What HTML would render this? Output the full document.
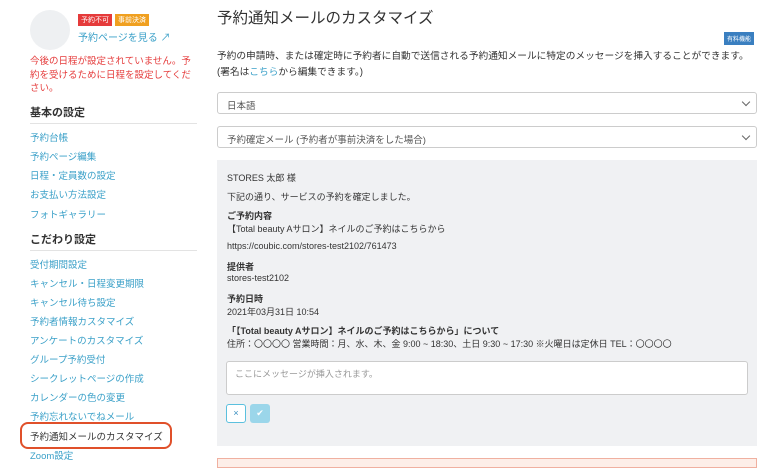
<!DOCTYPE html>
<html><head><meta charset="utf-8"><style>
*{margin:0;padding:0;box-sizing:border-box}
body{width:768px;height:460px;overflow:hidden;background:#fff;font-family:"Liberation Sans","Noto Sans CJK JP",sans-serif;color:#333;position:relative}
.a{position:absolute;white-space:nowrap}
.l{color:#3aa0c8;font-size:9.5px;left:30px}
.h{font-size:11px;font-weight:bold;color:#333;left:30px}
.hr{position:absolute;left:30px;width:167px;height:1px;background:#e3e3e3}
.m{font-size:9px;color:#333;left:227px}
.b{font-weight:bold}
.sel{position:absolute;left:217px;width:540px;height:22px;border:1px solid #ccc;border-radius:3px;font-size:9.5px;color:#555;padding:5px 9px}
.sel:after{content:"";position:absolute;right:7px;top:6px;width:5px;height:5px;border-right:1.5px solid #666;border-bottom:1.5px solid #666;transform:rotate(45deg)}
</style></head><body>
<div class="a" style="left:30px;top:10px;width:40px;height:40px;border-radius:50%;background:#eef0f2"></div>
<div class="a" style="left:78px;top:14px;background:#e53b3b;color:#fff;font-size:7px;padding:1px 3px">予約不可</div>
<div class="a" style="left:115px;top:14px;background:#f0a020;color:#fff;font-size:7px;padding:1px 3px">事前決済</div>
<div class="a" style="left:78px;top:29px;color:#3aa0c8;font-size:10px">予約ページを見る ↗</div>
<div class="a" style="left:30px;top:55px;color:#e53b3b;font-size:9.5px;line-height:13.5px;white-space:normal;width:164px">今後の日程が設定されていません。予約を受けるために日程を設定してください。</div>
<div class="a h" style="top:104px">基本の設定</div>
<div class="hr" style="top:123px"></div>
<div class="a l" style="top:130px">予約台帳</div>
<div class="a l" style="top:149px">予約ページ編集</div>
<div class="a l" style="top:168px">日程・定員数の設定</div>
<div class="a l" style="top:187px">お支払い方法設定</div>
<div class="a l" style="top:207px">フォトギャラリー</div>
<div class="a h" style="top:231px">こだわり設定</div>
<div class="hr" style="top:250px"></div>
<div class="a l" style="top:257px">受付期間設定</div>
<div class="a l" style="top:276px">キャンセル・日程変更期限</div>
<div class="a l" style="top:295px">キャンセル待ち設定</div>
<div class="a l" style="top:314px">予約者情報カスタマイズ</div>
<div class="a l" style="top:333px">アンケートのカスタマイズ</div>
<div class="a l" style="top:352px">グループ予約受付</div>
<div class="a l" style="top:371px">シークレットページの作成</div>
<div class="a l" style="top:390px">カレンダーの色の変更</div>
<div class="a l" style="top:409px">予約忘れないでねメール</div>
<div class="a" style="left:20px;top:422px;width:152px;height:27px;border:2px solid #e0502a;border-radius:8px"></div>
<div class="a" style="left:30px;top:429px;font-size:9.5px;color:#333">予約通知メールのカスタマイズ</div>
<div class="a l" style="top:448px">Zoom設定</div>

<div class="a" style="left:217px;top:6px;font-size:15.5px;color:#333">予約通知メールのカスタマイズ</div>
<div class="a" style="left:724px;top:32px;background:#3a7fc0;color:#fff;font-size:6px;padding:2px 3px">有料機能</div>
<div class="a" style="left:217px;top:49px;font-size:9.7px;line-height:16px;color:#333">予約の申請時、または確定時に予約者に自動で送信される予約通知メールに特定のメッセージを挿入することができます。<br>(署名は<span style="color:#3aa0c8">こちら</span>から編集できます。)</div>
<div class="sel" style="top:92px">日本語</div>
<div class="sel" style="top:126px">予約確定メール (予約者が事前決済をした場合)</div>
<div class="a" style="left:217px;top:160px;width:540px;height:286px;background:#f0f1f3"></div>
<div class="a m" style="top:171px">STORES 太郎 様</div>
<div class="a m" style="top:190px">下記の通り、サービスの予約を確定しました。</div>
<div class="a m b" style="top:209px">ご予約内容</div>
<div class="a m" style="top:222px">【Total beauty Aサロン】ネイルのご予約はこちらから</div>
<div class="a m" style="top:241px">https://coubic.com/stores-test2102/761473</div>
<div class="a m b" style="top:260px">提供者</div>
<div class="a m" style="top:273px">stores-test2102</div>
<div class="a m b" style="top:292px">予約日時</div>
<div class="a m" style="top:305px">2021年03月31日 10:54</div>
<div class="a m b" style="top:324px">「【Total beauty Aサロン】ネイルのご予約はこちらから」について</div>
<div class="a m" style="top:337px">住所：〇〇〇〇 営業時間：月、水、木、金 9:00 ~ 18:30、土日 9:30 ~ 17:30 ※火曜日は定休日 TEL：〇〇〇〇</div>
<div class="a" style="left:226px;top:361px;width:522px;height:34px;background:#fff;border:1px solid #ccc;border-radius:3px;font-size:9px;color:#999;padding:5px 8px">ここにメッセージが挿入されます。</div>
<div class="a" style="left:226px;top:404px;width:20px;height:19px;border:1px solid #5bc0de;border-radius:3px;background:#fff;color:#3a8fc0;font-size:9px;text-align:center;line-height:17px">×</div>
<div class="a" style="left:250px;top:404px;width:20px;height:19px;border-radius:3px;background:#9bd6ea;color:#fff;font-size:9px;text-align:center;line-height:19px">✔</div>
<div class="a" style="left:217px;top:458px;width:540px;height:10px;border:1px solid #f0b0a0;background:#fdeee8"></div>
</body></html>
